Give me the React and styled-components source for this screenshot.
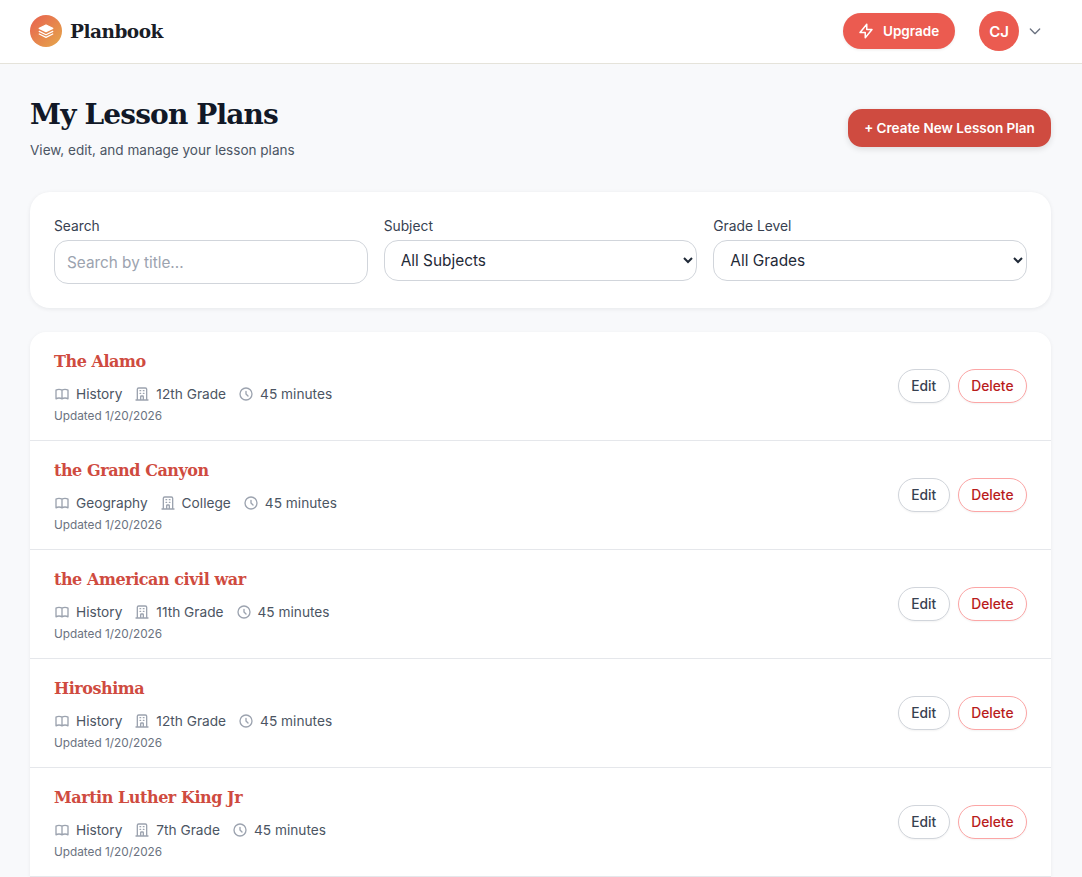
import React from 'react'
import styled, { createGlobalStyle } from 'styled-components'
import {
  HiOutlineBookOpen,
  HiOutlineChevronDown,
  HiOutlineClock,
  HiOutlineLightningBolt,
  HiOutlineOfficeBuilding,
} from 'react-icons/hi'

const SANS = `'Inter', 'Noto Sans', sans-serif`
const SERIF = `'DejaVu Serif', 'Liberation Serif', serif`

const plans = [
  { title: 'The Alamo', subject: 'History', grade: '12th Grade' },
  { title: 'the Grand Canyon', subject: 'Geography', grade: 'College' },
  { title: 'the American civil war', subject: 'History', grade: '11th Grade' },
  { title: 'Hiroshima', subject: 'History', grade: '12th Grade' },
  { title: 'Martin Luther King Jr', subject: 'History', grade: '7th Grade' },
]

const GlobalStyle = createGlobalStyle`
  html, body {
    margin: 0;
    height: 877px;
    overflow: hidden;
    background: #f8f9fb;
    font-family: ${SANS};
  }
  * {
    box-sizing: border-box;
  }
`

const Header = styled.header`
  height: 64px;
  display: flex;
  align-items: center;
  justify-content: space-between;
  padding: 0 30px 1px;
  background: #fff;
  border-bottom: 1px solid #e5e3da;
`

const Brand = styled.div`
  display: flex;
  align-items: center;
  gap: 8px;
`

const LogoMark = styled.div`
  width: 32px;
  height: 32px;
  border-radius: 50%;
  display: flex;
  align-items: center;
  justify-content: center;
  background: linear-gradient(135deg, #e8604f, #e5a84b);
`

const BrandName = styled.span`
  font-family: ${SERIF};
  font-weight: 700;
  font-size: 18.5px;
  letter-spacing: -0.5px;
  color: #1a1d26;
`

const HeaderActions = styled.div`
  display: flex;
  align-items: center;
`

const UpgradeButton = styled.button`
  width: 112px;
  height: 36px;
  padding: 0 0 0 14px;
  border: 0;
  border-radius: 18px;
  display: flex;
  align-items: center;
  gap: 8px;
  background: #eb5b50;
  color: #fff;
  font-family: ${SANS};
  font-size: 13.5px;
  font-weight: 600;
  box-shadow: 0 1px 3px rgba(0, 0, 0, 0.08);
`

const Avatar = styled.div`
  width: 40px;
  height: 40px;
  margin-left: 24px;
  border-radius: 50%;
  display: flex;
  align-items: center;
  justify-content: center;
  background: #eb5b50;
  color: #fff;
  font-size: 15px;
  font-weight: 600;
`

const Caret = styled.div`
  display: flex;
  margin-left: 8px;
  margin-right: 9px;
  color: #6b7280;
`

const Main = styled.main`
  padding: 30px 31px 0 30px;
`

const TitleRow = styled.div`
  display: flex;
  justify-content: space-between;
  align-items: flex-start;
  margin-bottom: 32px;
`

const PageTitle = styled.h1`
  margin: 0;
  font-family: ${SERIF};
  font-size: 28px;
  line-height: 42px;
  font-weight: 700;
  letter-spacing: -0.85px;
  color: #111827;
`

const Subtitle = styled.p`
  margin: 4px 0 0;
  font-size: 13.55px;
  line-height: 20px;
  color: #4b5563;
`

const CreateButton = styled.button`
  width: 203px;
  height: 38px;
  margin-top: 15px;
  border: 0;
  border-radius: 14px;
  background: #cf4b40;
  color: #fff;
  font-family: ${SANS};
  font-size: 13.5px;
  font-weight: 600;
  box-shadow: 0 2px 6px rgba(0, 0, 0, 0.12);
`

const FilterPanel = styled.section`
  display: grid;
  grid-template-columns: repeat(3, 1fr);
  gap: 16px;
  height: 116px;
  padding: 24px;
  margin-bottom: 24px;
  background: #fff;
  border-radius: 20px;
  box-shadow: 0 1px 4px rgba(17, 24, 39, 0.08);
`

const Field = styled.label`
  display: flex;
  flex-direction: column;
  align-items: stretch;
`

const FieldLabel = styled.span`
  font-size: 13.8px;
  line-height: 20px;
  margin-bottom: 4px;
  color: #374151;
`

const SearchInput = styled.input`
  height: 44px;
  padding: 0 12px;
  border: 1px solid #d1d5db;
  border-radius: 14px;
  font-family: ${SANS};
  font-size: 15.3px;
  &::placeholder {
    color: #9ca3af;
  }
`

const Select = styled.select`
  height: 41px;
  padding: 0 12px;
  border: 1px solid #d1d5db;
  border-radius: 14px;
  background: #fff;
  color: #1f2937;
  font-family: ${SANS};
  font-size: 15.4px;
`

const PlanList = styled.section`
  background: #fff;
  border-radius: 16px 16px 0 0;
  box-shadow: 0 1px 4px rgba(17, 24, 39, 0.06);
`

const PlanRow = styled.article`
  height: 109px;
  padding: 16px 24px 0;
  display: flex;
  justify-content: space-between;
  border-bottom: 1px solid #e5e7eb;
`

const PlanTitle = styled.h3`
  margin: 0;
  font-family: ${SERIF};
  font-size: 16px;
  line-height: 28px;
  font-weight: 600;
  letter-spacing: -0.45px;
  color: #cf4b40;
`

const MetaRow = styled.div`
  display: flex;
  gap: 12px;
  margin-top: 8px;
  font-size: 13.7px;
  line-height: 20px;
  color: #4b5563;
`

const MetaItem = styled.span`
  display: flex;
  align-items: center;
  gap: 6px;
  svg {
    color: #9ca3af;
  }
`

const Updated = styled.div`
  margin-top: 4px;
  font-size: 11.8px;
  line-height: 16px;
  color: #6b7280;
`

const RowActions = styled.div`
  display: flex;
  gap: 8px;
  margin-top: 21px;
`

const RowButton = styled.button`
  height: 34px;
  padding: 0 12.5px;
  border-radius: 17px;
  background: #fff;
  border: 1px solid ${p => (p.$danger ? '#fca5a5' : '#d1d5db')};
  color: ${p => (p.$danger ? '#b91c1c' : '#374151')};
  font-family: ${SANS};
  font-size: 13.8px;
  font-weight: 500;
  box-shadow: 0 1px 2px rgba(0, 0, 0, 0.05);
`

const LayersMark = () => (
  <svg width="18" height="18" viewBox="0 0 24 24" fill="none" stroke="#fff" strokeWidth="1.7" strokeLinecap="round" strokeLinejoin="round">
    <path d="M12 4 3 8.5l9 4.5 9-4.5L12 4Z" fill="#fff" />
    <path d="m3 12.5 9 4.5 9-4.5" />
    <path d="m3 16 9 4.5 9-4.5" />
  </svg>
)

const PlanItem = ({ title, subject, grade }) => (
  <PlanRow>
    <div>
      <PlanTitle>{title}</PlanTitle>
      <MetaRow>
        <MetaItem><HiOutlineBookOpen size={16} />{subject}</MetaItem>
        <MetaItem><HiOutlineOfficeBuilding size={16} />{grade}</MetaItem>
        <MetaItem><HiOutlineClock size={16} />45 minutes</MetaItem>
      </MetaRow>
      <Updated>Updated 1/20/2026</Updated>
    </div>
    <RowActions>
      <RowButton>Edit</RowButton>
      <RowButton $danger>Delete</RowButton>
    </RowActions>
  </PlanRow>
)

const App = () => (
  <>
    <GlobalStyle />
    <Header>
      <Brand>
        <LogoMark><LayersMark /></LogoMark>
        <BrandName>Planbook</BrandName>
      </Brand>
      <HeaderActions>
        <UpgradeButton><HiOutlineLightningBolt size={18} />Upgrade</UpgradeButton>
        <Avatar>CJ</Avatar>
        <Caret><HiOutlineChevronDown size={16} /></Caret>
      </HeaderActions>
    </Header>
    <Main>
      <TitleRow>
        <div>
          <PageTitle>My Lesson Plans</PageTitle>
          <Subtitle>View, edit, and manage your lesson plans</Subtitle>
        </div>
        <CreateButton>+ Create New Lesson Plan</CreateButton>
      </TitleRow>
      <FilterPanel>
        <Field>
          <FieldLabel>Search</FieldLabel>
          <SearchInput placeholder="Search by title..." />
        </Field>
        <Field>
          <FieldLabel>Subject</FieldLabel>
          <Select><option>All Subjects</option></Select>
        </Field>
        <Field>
          <FieldLabel>Grade Level</FieldLabel>
          <Select><option>All Grades</option></Select>
        </Field>
      </FilterPanel>
      <PlanList>
        {plans.map(plan => <PlanItem key={plan.title} {...plan} />)}
      </PlanList>
    </Main>
  </>
)

export default App
